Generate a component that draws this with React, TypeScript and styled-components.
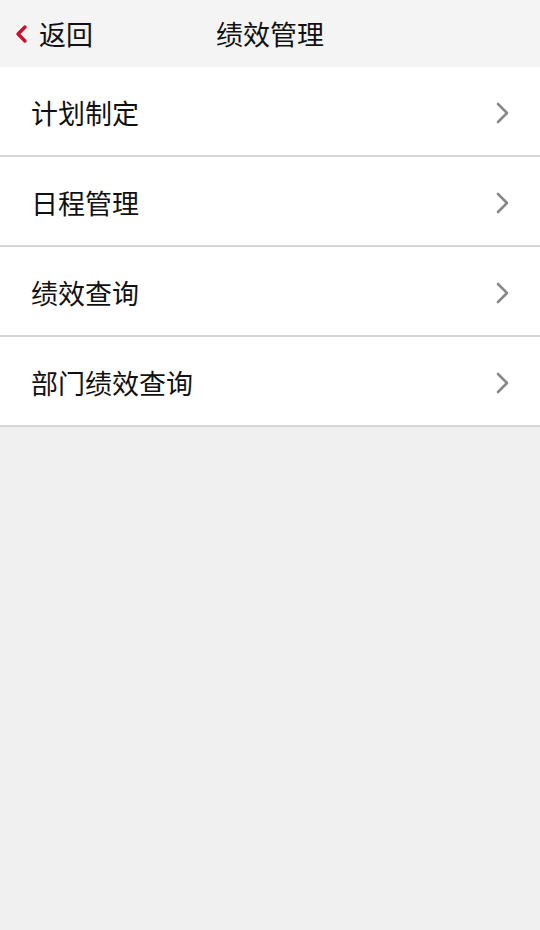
import React from "react";
import styled, { createGlobalStyle } from "styled-components";

const Global = createGlobalStyle`
  html, body { margin: 0; padding: 0; background: #f0f0f0; }
  body { font-family: "Noto Sans CJK SC", "Noto Sans", sans-serif; color: #111; }
`;

const Page = styled.div`
  width: 540px;
  min-height: 930px;
  background: #f0f0f0;
`;

const Header = styled.header`
  position: relative;
  height: 67px;
  background: #f4f4f4;
  display: flex;
  align-items: center;
  justify-content: center;
`;

const Back = styled.div`
  position: absolute;
  left: 13px;
  top: 0;
  height: 67px;
  display: flex;
  align-items: center;
  gap: 10px;
  font-size: 27px;
  color: #111;
`;

const Title = styled.h1`
  margin: 0;
  font-size: 27px;
  font-weight: 400;
  color: #111;
  line-height: 1;
`;

const List = styled.ul`
  list-style: none;
  margin: 0;
  padding: 0;
`;

const Row = styled.li`
  height: 88px;
  box-sizing: border-box;
  background: #fff;
  border-bottom: 2px solid #d6d6d6;
  height: 90px;
  display: flex;
  align-items: center;
  justify-content: space-between;
  padding: 3px 29px 0 31px;
`;

const Label = styled.span`
  font-size: 27px;
  color: #111;
  line-height: 1;
`;

const items = ["计划制定", "日程管理", "绩效查询", "部门绩效查询"];

export default function App() {
  return (
    <Page>
      <Global />
      <Header>
        <Back>
          <svg width="16" height="20" viewBox="0 0 16 20">
            <path d="M12 3 L5 10 L12 17" fill="none" stroke="#c8102e" strokeWidth="3.4" strokeLinecap="round" strokeLinejoin="round" />
          </svg>
          <span>返回</span>
        </Back>
        <Title>绩效管理</Title>
      </Header>
      <List>
        {items.map((t) => (
          <Row key={t}>
            <Label>{t}</Label>
            <svg width="16" height="24" viewBox="0 0 16 24">
              <path d="M3 3 L12 12 L3 21" fill="none" stroke="#888" strokeWidth="2.6" strokeLinecap="round" strokeLinejoin="round" />
            </svg>
          </Row>
        ))}
      </List>
    </Page>
  );
}
